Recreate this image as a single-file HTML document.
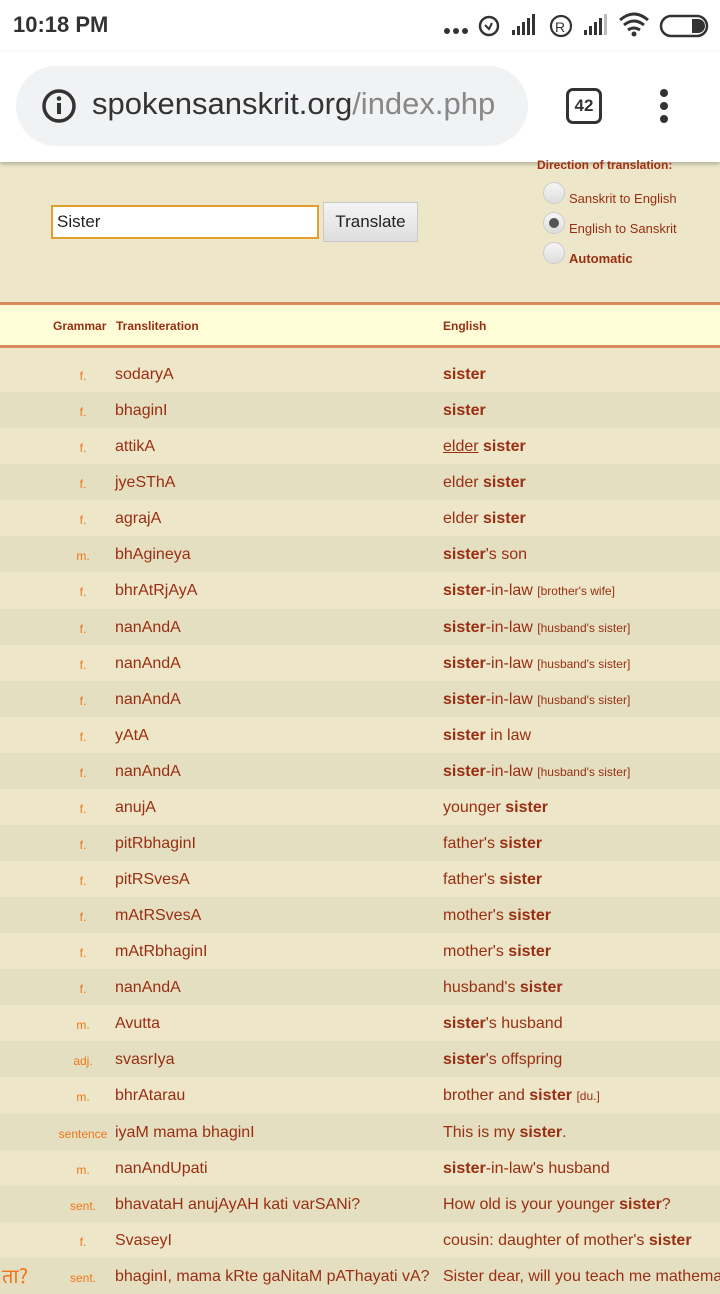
<!DOCTYPE html>
<html><head><meta charset="utf-8"><style>
*{margin:0;padding:0;box-sizing:border-box}
body{width:720px;height:1280px;overflow:hidden;background:#ede6c8;font-family:"Liberation Sans","Noto Sans CJK SC",sans-serif;position:relative;color:#9a2e12}
.sb{position:absolute;left:0;top:0;width:720px;height:52px;background:#fff}
.time{position:absolute;left:13px;top:12px;font-size:22px;font-weight:bold;color:#333}
.ab{position:absolute;left:0;top:52px;width:720px;height:110px;background:#fff;box-shadow:0 2px 4px rgba(0,0,0,.25)}
.url{position:absolute;left:16px;top:14px;width:512px;height:80px;border-radius:40px;background:#f1f2f4}
.url span{position:absolute;left:76px;top:20px;font-size:31px;color:#333;white-space:nowrap;width:416px;overflow:hidden}
.url i{font-style:normal;color:#888}
.row{position:absolute;left:0;width:720px;height:36px}
.row.d{background:#e5dfc1}
.g{position:absolute;left:50px;width:66px;text-align:center;font-size:12px;color:#f07518;top:13px}
.t{position:absolute;left:115px;font-size:16px;top:10px;white-space:nowrap}
.e{position:absolute;left:443px;font-size:16px;top:10px;white-space:nowrap}
.e b{font-weight:bold}
.e small{font-size:12px}
</style></head><body>
<div class="sb"><div class="time">10:18 PM</div>
<svg style="position:absolute;left:440px;top:10px" width="275" height="32" viewBox="0 0 275 32">
<g fill="#333"><circle cx="7" cy="21" r="3"/><circle cx="16" cy="21" r="3"/><circle cx="25" cy="21" r="3"/></g>
<circle cx="49" cy="16" r="9" fill="none" stroke="#333" stroke-width="2.5"/><path d="M45 15l4 4 3-6" fill="none" stroke="#333" stroke-width="2"/>
<g fill="#333"><rect x="72" y="20" width="3" height="5"/><rect x="77" y="16" width="3" height="9"/><rect x="82" y="12" width="3" height="13"/><rect x="87" y="8" width="3" height="17"/><rect x="92" y="4" width="3" height="21"/></g>
<circle cx="121" cy="16" r="10" fill="none" stroke="#333" stroke-width="2.2"/><text x="115" y="22" font-size="14" font-family="Liberation Sans" fill="#333">R</text>
<g fill="#333"><rect x="144" y="20" width="3" height="5"/><rect x="149" y="16" width="3" height="9"/><rect x="154" y="12" width="3" height="13"/><rect x="159" y="8" width="3" height="17"/><rect x="164" y="4" width="3" height="21" fill="#bbb"/></g>
<path d="M180 10q14-12 28 0M184 15q10-8 20 0M188 20q6-4 12 0" fill="none" stroke="#333" stroke-width="3"/><circle cx="194" cy="24" r="2.5" fill="#333"/>
<rect x="221" y="6" width="46" height="20" rx="10" fill="none" stroke="#333" stroke-width="2.5"/><path d="M252 9h6a7 7 0 0 1 0 14h-6z" fill="#333"/>
</svg></div>
<div class="ab"><div class="url">
<svg style="position:absolute;left:25px;top:22px" width="36" height="36"><circle cx="18" cy="18" r="15" fill="none" stroke="#333" stroke-width="3.5"/><rect x="16" y="15" width="4" height="11" fill="#333"/><circle cx="18" cy="10.5" r="2.3" fill="#333"/></svg>
<span>spokensanskrit.org<i>/index.php</i></span></div>
<div style="position:absolute;left:566px;top:36px;width:36px;height:36px;border:3.5px solid #333;border-radius:7px;font-size:17px;font-weight:bold;text-align:center;line-height:29px;color:#333">42</div>
<svg style="position:absolute;left:656px;top:36px" width="16" height="40"><circle cx="8" cy="5" r="4" fill="#333"/><circle cx="8" cy="18" r="4" fill="#333"/><circle cx="8" cy="31" r="4" fill="#333"/></svg>
</div>
<div style="position:absolute;left:537px;top:158px;font-size:12px;font-weight:bold;color:#a03014">Direction of translation:</div>
<div style="position:absolute;left:51px;top:205px;width:268px;height:34px;border:2px solid #e0a030;background:#fff;font-size:17px;color:#222;padding:5px 4px">Sister</div>
<div style="position:absolute;left:323px;top:202px;width:95px;height:40px;border:1px solid #c8c8c8;background:linear-gradient(#f4f4f4,#dedede);font-size:17px;color:#222;text-align:center;line-height:38px">Translate</div>
<div style="position:absolute;left:543px;top:182px;width:22px;height:22px;border-radius:50%;background:linear-gradient(#f6f6f6,#ddd);border:1px solid #ccc"></div>
<div style="position:absolute;left:569px;top:191px;font-size:13px">Sanskrit to English</div>
<div style="position:absolute;left:543px;top:212px;width:22px;height:22px;border-radius:50%;background:linear-gradient(#f6f6f6,#ddd);border:1px solid #ccc"><div style="position:absolute;left:5px;top:5px;width:10px;height:10px;border-radius:50%;background:#555"></div></div>
<div style="position:absolute;left:569px;top:221px;font-size:13px">English to Sanskrit</div>
<div style="position:absolute;left:543px;top:242px;width:22px;height:22px;border-radius:50%;background:linear-gradient(#f6f6f6,#ddd);border:1px solid #ccc"></div>
<div style="position:absolute;left:569px;top:251px;font-size:13px;font-weight:bold">Automatic</div>
<div style="position:absolute;left:0;top:302px;width:720px;height:46px;background:#fefdd8;border-top:3px solid #d98a5a;border-bottom:3px solid #d98a5a;font-size:12px;font-weight:bold">
<span style="position:absolute;left:53px;top:14px">Grammar</span><span style="position:absolute;left:116px;top:14px">Transliteration</span><span style="position:absolute;left:443px;top:14px">English</span></div>
<div class="row" style="top:356px"><div class="g">f.</div><div class="t">sodaryA</div><div class="e"><b>sister</b></div></div>
<div class="row d" style="top:392px"><div class="g">f.</div><div class="t">bhaginI</div><div class="e"><b>sister</b></div></div>
<div class="row" style="top:428px"><div class="g">f.</div><div class="t">attikA</div><div class="e"><u>elder</u> <b>sister</b></div></div>
<div class="row d" style="top:464px"><div class="g">f.</div><div class="t">jyeSThA</div><div class="e">elder <b>sister</b></div></div>
<div class="row" style="top:500px"><div class="g">f.</div><div class="t">agrajA</div><div class="e">elder <b>sister</b></div></div>
<div class="row d" style="top:536px"><div class="g">m.</div><div class="t">bhAgineya</div><div class="e"><b>sister</b>'s son</div></div>
<div class="row" style="top:572px"><div class="g">f.</div><div class="t">bhrAtRjAyA</div><div class="e"><b>sister</b>-in-law <small>[brother's wife]</small></div></div>
<div class="row d" style="top:609px"><div class="g">f.</div><div class="t">nanAndA</div><div class="e"><b>sister</b>-in-law <small>[husband's sister]</small></div></div>
<div class="row" style="top:645px"><div class="g">f.</div><div class="t">nanAndA</div><div class="e"><b>sister</b>-in-law <small>[husband's sister]</small></div></div>
<div class="row d" style="top:681px"><div class="g">f.</div><div class="t">nanAndA</div><div class="e"><b>sister</b>-in-law <small>[husband's sister]</small></div></div>
<div class="row" style="top:717px"><div class="g">f.</div><div class="t">yAtA</div><div class="e"><b>sister</b> in law</div></div>
<div class="row d" style="top:753px"><div class="g">f.</div><div class="t">nanAndA</div><div class="e"><b>sister</b>-in-law <small>[husband's sister]</small></div></div>
<div class="row" style="top:789px"><div class="g">f.</div><div class="t">anujA</div><div class="e">younger <b>sister</b></div></div>
<div class="row d" style="top:825px"><div class="g">f.</div><div class="t">pitRbhaginI</div><div class="e">father's <b>sister</b></div></div>
<div class="row" style="top:861px"><div class="g">f.</div><div class="t">pitRSvesA</div><div class="e">father's <b>sister</b></div></div>
<div class="row d" style="top:897px"><div class="g">f.</div><div class="t">mAtRSvesA</div><div class="e">mother's <b>sister</b></div></div>
<div class="row" style="top:933px"><div class="g">f.</div><div class="t">mAtRbhaginI</div><div class="e">mother's <b>sister</b></div></div>
<div class="row d" style="top:969px"><div class="g">f.</div><div class="t">nanAndA</div><div class="e">husband's <b>sister</b></div></div>
<div class="row" style="top:1005px"><div class="g">m.</div><div class="t">Avutta</div><div class="e"><b>sister</b>'s husband</div></div>
<div class="row d" style="top:1041px"><div class="g">adj.</div><div class="t">svasrIya</div><div class="e"><b>sister</b>'s offspring</div></div>
<div class="row" style="top:1077px"><div class="g">m.</div><div class="t">bhrAtarau</div><div class="e">brother and <b>sister</b> <small>[du.]</small></div></div>
<div class="row d" style="top:1114px"><div class="g">sentence</div><div class="t">iyaM mama bhaginI</div><div class="e">This is my <b>sister</b>.</div></div>
<div class="row" style="top:1150px"><div class="g">m.</div><div class="t">nanAndUpati</div><div class="e"><b>sister</b>-in-law's husband</div></div>
<div class="row d" style="top:1186px"><div class="g">sent.</div><div class="t">bhavataH anujAyAH kati varSANi?</div><div class="e">How old is your younger <b>sister</b>?</div></div>
<div class="row" style="top:1222px"><div class="g">f.</div><div class="t">SvaseyI</div><div class="e">cousin: daughter of mother's <b>sister</b></div></div>
<div class="row d" style="top:1258px"><div style="position:absolute;left:2px;top:2px;font-size:20px;color:#f07518;font-family:'Noto Sans CJK SC',sans-serif">ता?</div><div class="g">sent.</div><div class="t">bhaginI, mama kRte gaNitaM pAThayati vA?</div><div class="e">Sister dear, will you teach me mathematics?</div></div>
</body></html>
